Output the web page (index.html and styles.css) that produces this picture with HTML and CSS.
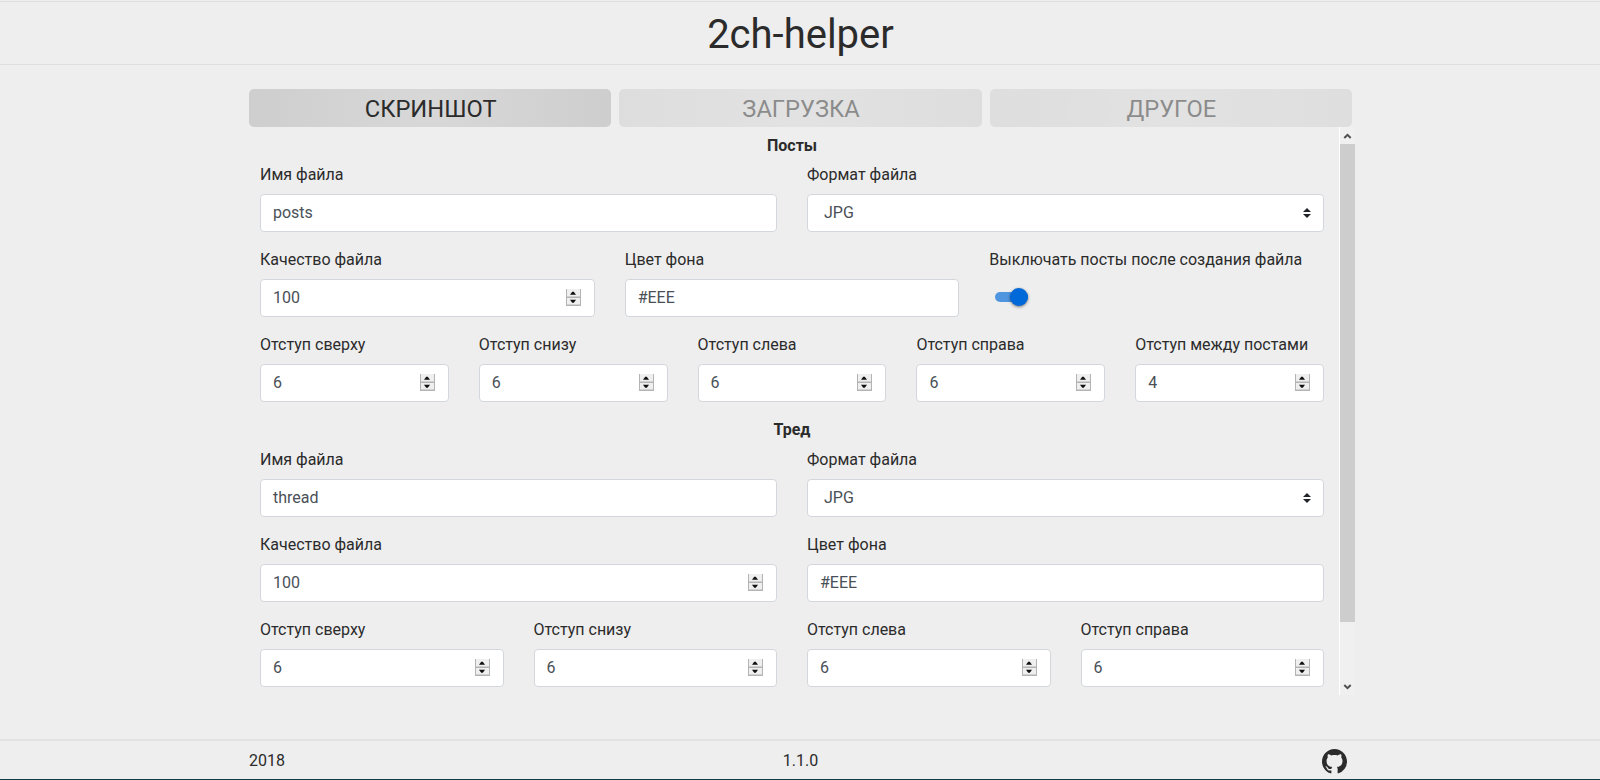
FILE: index.html
```html
<!DOCTYPE html>
<html lang="ru">
<head>
<meta charset="utf-8">
<title>2ch-helper</title>
<link rel="stylesheet" href="styles.css">
</head>
<body>
<svg class="defs" aria-hidden="true">
  <symbol id="spin" viewBox="0 0 15 17">
    <path fill="#efefef" d="M0 0h15v17H0z"/>
    <path fill="#b4b4b4" d="M0 0h1v17H0zM14 0h1v17h-1zM0 7.4h15v1.5H0zM0 15.5h15V17H0z"/>
    <path fill="#111" d="M4 5.7h6L7.8 2.7h-1.6zM4 10.7h6l-2.2 3h-1.6z"/>
  </symbol>
  <symbol id="sort" viewBox="0 0 8 10">
    <path fill="#212529" d="M0 4 4 0l4 4zM0 6h8l-4 4z"/>
  </symbol>
</svg>
<header class="header"><h1 class="title">2ch-helper</h1></header>
<main class="main">
  <nav class="tabs">
    <button class="tab tab-active">СКРИНШОТ</button>
    <button class="tab">ЗАГРУЗКА</button>
    <button class="tab">ДРУГОЕ</button>
  </nav>
  <div class="panel">
    <div class="content">
      <section class="section">
        <h2 class="heading">Посты</h2>
        <div class="row">
          <div class="field"><label class="label">Имя файла</label><div class="input">posts</div></div>
          <div class="field"><label class="label">Формат файла</label><div class="input select">JPG<svg class="sort"><use href="#sort"/></svg></div></div>
        </div>
        <div class="row">
          <div class="field"><label class="label">Качество файла</label><div class="input">100<svg class="spin"><use href="#spin"/></svg></div></div>
          <div class="field"><label class="label">Цвет фона</label><div class="input">#EEE</div></div>
          <div class="field"><label class="label">Выключать посты после создания файла</label><div class="toggle"><span class="track"><span class="knob"></span></span></div></div>
        </div>
        <div class="row">
          <div class="field"><label class="label">Отступ сверху</label><div class="input">6<svg class="spin"><use href="#spin"/></svg></div></div>
          <div class="field"><label class="label">Отступ снизу</label><div class="input">6<svg class="spin"><use href="#spin"/></svg></div></div>
          <div class="field"><label class="label">Отступ слева</label><div class="input">6<svg class="spin"><use href="#spin"/></svg></div></div>
          <div class="field"><label class="label">Отступ справа</label><div class="input">6<svg class="spin"><use href="#spin"/></svg></div></div>
          <div class="field"><label class="label">Отступ между постами</label><div class="input">4<svg class="spin"><use href="#spin"/></svg></div></div>
        </div>
      </section>
      <section class="section">
        <h2 class="heading heading-thread">Тред</h2>
        <div class="row">
          <div class="field"><label class="label">Имя файла</label><div class="input">thread</div></div>
          <div class="field"><label class="label">Формат файла</label><div class="input select">JPG<svg class="sort"><use href="#sort"/></svg></div></div>
        </div>
        <div class="row">
          <div class="field"><label class="label">Качество файла</label><div class="input">100<svg class="spin"><use href="#spin"/></svg></div></div>
          <div class="field"><label class="label">Цвет фона</label><div class="input">#EEE</div></div>
        </div>
        <div class="row">
          <div class="field"><label class="label">Отступ сверху</label><div class="input">6<svg class="spin"><use href="#spin"/></svg></div></div>
          <div class="field"><label class="label">Отступ снизу</label><div class="input">6<svg class="spin"><use href="#spin"/></svg></div></div>
          <div class="field"><label class="label">Отступ слева</label><div class="input">6<svg class="spin"><use href="#spin"/></svg></div></div>
          <div class="field"><label class="label">Отступ справа</label><div class="input">6<svg class="spin"><use href="#spin"/></svg></div></div>
        </div>
      </section>
    </div>
    <div class="scrollbar">
      <svg class="arrow" viewBox="0 0 15 17"><path d="M4.3 11 7.5 7.8 10.7 11"/></svg>
      <div class="thumb"></div>
      <svg class="arrow" viewBox="0 0 15 17"><path d="M4.3 7 7.5 10.2 10.7 7"/></svg>
    </div>
  </div>
</main>
<footer class="footer">
  <div class="footer-inner">
    <span>2018</span>
    <span class="version">1.1.0</span>
    <svg class="github" viewBox="0 0 16 16"><path fill="#2b2b2b" fill-rule="evenodd" d="M8 0C3.58 0 0 3.58 0 8c0 3.54 2.29 6.53 5.47 7.59.4.07.55-.17.55-.38 0-.19-.01-.82-.01-1.49-2.01.37-2.53-.49-2.69-.94-.09-.23-.48-.94-.82-1.13-.28-.15-.68-.52-.01-.53.63-.01 1.08.58 1.23.82.72 1.21 1.87.87 2.33.66.07-.52.28-.87.51-1.07-1.78-.2-3.64-.89-3.64-3.95 0-.87.31-1.59.82-2.15-.08-.2-.36-1.02.08-2.12 0 0 .67-.21 2.2.82.64-.18 1.32-.27 2-.27s1.36.09 2 .27c1.53-1.04 2.2-.82 2.2-.82.44 1.1.16 1.92.08 2.12.51.56.82 1.27.82 2.15 0 3.07-1.87 3.75-3.65 3.95.29.25.54.73.54 1.48 0 1.07-.01 1.93-.01 2.2 0 .21.15.46.55.38A8.01 8.01 0 0 0 16 8c0-4.42-3.58-8-8-8z"/></svg>
  </div>
</footer>
</body>
</html>
```
FILE: styles.css
```css
* { box-sizing: border-box; }
body {
  margin: 0;
  height: 780px;
  overflow: hidden;
  display: flex;
  flex-direction: column;
  background: #eee;
  color: #2b2b2b;
  font: 16px/24px Roboto, "Noto Sans", sans-serif;
}
.defs { display: none; }
.header {
  height: 64px;
  margin-top: 1px;
  flex: none;
  border-top: 1px solid #dedede;
  border-bottom: 1px solid #dedede;
  text-align: center;
}
.title {
  margin: 0;
  padding: 9px 0 0 1px;
  font-size: 40px;
  line-height: 48px;
  font-weight: 400;
}
.main {
  width: 1106px;
  margin: 24px 0 0 249px;
  flex: 1;
}
.tabs {
  display: grid;
  grid-template-columns: repeat(3, 1fr);
  gap: 8px;
  width: 1103px;
}
.tab {
  height: 38px;
  padding: 2px 0 0 1px;
  border: 0;
  border-radius: 5px;
  background: radial-gradient(circle, #d8d8d8, #cecece);
  color: #2b2b2b;
  font: 23.7px/36px Roboto, "Noto Sans", sans-serif;
  opacity: .5;
}
.tab-active { opacity: 1; }
.panel {
  display: flex;
  justify-content: space-between;
  height: 568px;
}
.content {
  width: 1064px;
  margin-left: 11px;
  padding-top: 7px;
}
.section { margin-bottom: 16px; }
.heading {
  margin: 0 0 5px;
  font-size: 16px;
  line-height: 24px;
  font-weight: 700;
  text-align: center;
}
.heading-thread { margin-bottom: 6px; }
.row {
  display: flex;
  gap: 30px;
  margin-bottom: 16px;
}
.row:last-child { margin-bottom: 0; }
.field { flex: 1 1 0; min-width: 0; }
.label {
  display: block;
  margin-bottom: 7px;
  white-space: nowrap;
}
.input {
  display: flex;
  align-items: center;
  justify-content: space-between;
  height: 38px;
  padding: 0 12px;
  border: 1px solid #d3d7db;
  border-radius: 4px;
  background: #fff;
  color: #495057;
}
.select { padding-left: 16px; }
.spin { width: 15px; height: 17px; margin: 0 1px 2px 0; }
.sort { width: 8px; height: 10px; }
.toggle { padding: 13px 0 0 6px; height: 38px; }
.track {
  display: flex;
  align-items: center;
  justify-content: flex-end;
  width: 33px;
  height: 10px;
  border-radius: 5px;
  background: #5095e0;
}
.knob {
  flex: none;
  width: 18px;
  height: 18px;
  border-radius: 50%;
  background: #0069d9;
  box-shadow: 0 1px 3px rgba(0, 0, 0, .5);
}
.scrollbar {
  display: flex;
  flex-direction: column;
  width: 16px;
  border-left: 1px solid #fff;
  background: #f0f0f0;
}
.thumb { height: 478px; margin-bottom: auto; background: #cdcdcd; }
.arrow {
  width: 15px;
  height: 17px;
  fill: none;
  stroke: #505050;
  stroke-width: 2;
}
.footer {
  height: 41px;
  flex: none;
  border-top: 2px solid #e2e2e2;
  border-bottom: 1px solid #123c44;
}
.footer-inner {
  display: grid;
  grid-template-columns: 1fr auto 1fr;
  align-items: center;
  width: 1103px;
  height: 38px;
  padding-top: 1px;
  margin-left: 249px;
}
.github {
  width: 25px;
  height: 25px;
  justify-self: end;
  margin: 2px 5px 0 0;
}
```
